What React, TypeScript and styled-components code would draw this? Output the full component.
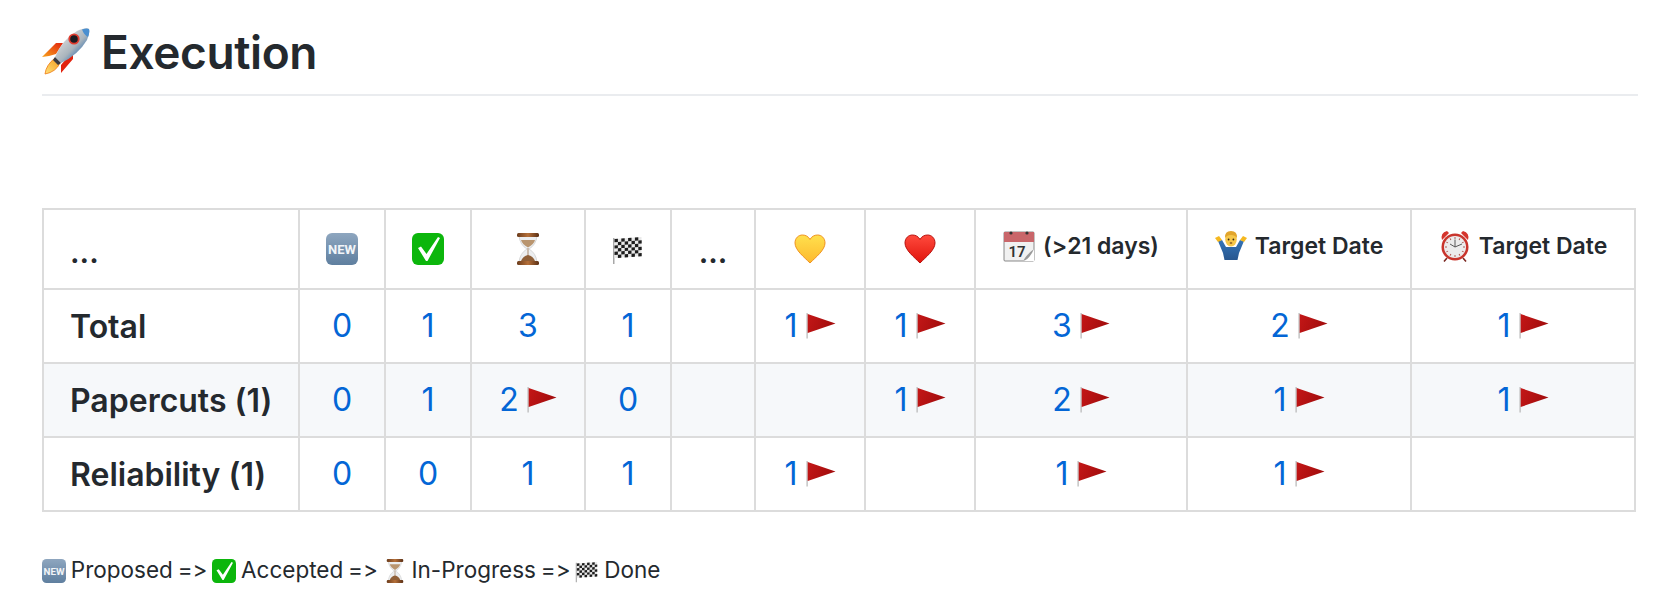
import React from "react";
import styled, { createGlobalStyle } from "styled-components";

const GlobalStyle = createGlobalStyle`
  html, body { margin: 0; padding: 0; background: #fff; }
  body {
    font-family: Inter, "Liberation Sans", sans-serif;
    color: #24292e;
    font-feature-settings: "calt" 0, "liga" 0;
  }
`;

const Page = styled.div`
  width: 1668px;
  height: 600px;
  padding: 0 30px 0 42px;
  box-sizing: border-box;
  overflow: hidden;
`;

const Title = styled.h1`
  margin: 0 0 112px;
  height: 96px;
  padding-top: 24px;
  box-sizing: border-box;
  border-bottom: 2px solid #eaecef;
  display: flex;
  align-items: flex-start;
  gap: 11px;
  font-size: 46px;
  line-height: 56px;
  font-weight: 600;
  letter-spacing: -0.4px;
`;

const Table = styled.table`
  border-collapse: collapse;
  table-layout: fixed;
  width: 1593px;
`;

const HeadCell = styled.th`
  border: 2px solid #dcdcdc;
  box-sizing: border-box;
  height: 80px;
  padding: 0;
  font-size: 23px;
  font-weight: 600;
  text-align: center;
  vertical-align: middle;
  white-space: nowrap;
`;

const Dots = styled(HeadCell)<{ $first?: boolean }>`
  font-size: 30px;
  text-align: ${(p) => (p.$first ? "left" : "center")};
  padding-left: ${(p) => (p.$first ? "26px" : "0")};
  padding-top: 6px;
`;

const HeadInner = styled.span`
  display: inline-flex;
  align-items: center;
  gap: 8px;
`;

const Row = styled.tr<{ $shade?: boolean }>`
  background: ${(p) => (p.$shade ? "#f6f8fa" : "#fff")};
`;

const LabelCell = styled.td`
  border: 2px solid #dcdcdc;
  height: 72px;
  padding: 0 0 0 26px;
  font-size: 32px;
  font-weight: 600;
  white-space: nowrap;
`;

const ValueCell = styled.td`
  border: 2px solid #dcdcdc;
  padding: 0;
  text-align: center;
  vertical-align: middle;
  white-space: nowrap;
`;

const Count = styled.a`
  display: inline-flex;
  align-items: center;
  gap: 8px;
  color: #0366d6;
  font-size: 32px;
  line-height: 36px;
  text-decoration: none;
`;

const Legend = styled.p`
  margin: 42px 0 0;
  font-size: 22.5px;
  line-height: 32px;
  word-spacing: -1.5px;
`;

const Icon = styled.svg`
  flex: none;
  display: inline-block;
  vertical-align: middle;
`;

const LegendIcon = styled(Icon)`
  vertical-align: -5px;
`;

const TitleIcon = styled(Icon)`
  margin-top: 4px;
`;

type IconProps = { size?: number; as?: typeof Icon };

const Rocket = ({ size = 48 }: IconProps) => (
  <TitleIcon width={size} height={size} viewBox="0 0 48 48">
    <defs>
      <linearGradient id="rocketBody" x1="0" y1="0" x2="1" y2="1">
        <stop offset="0.25" stopColor="#d3d6d8" />
        <stop offset="0.55" stopColor="#a9b4bc" />
        <stop offset="0.8" stopColor="#2f6fb0" />
      </linearGradient>
      <linearGradient id="rocketFlame" x1="0" y1="1" x2="1" y2="0">
        <stop offset="0" stopColor="#ffe27a" />
        <stop offset="1" stopColor="#f39a1c" />
      </linearGradient>
      <linearGradient id="rocketFin" x1="0" y1="1" x2="1" y2="0">
        <stop offset="0" stopColor="#f7a21b" />
        <stop offset="1" stopColor="#e2230e" />
      </linearGradient>
    </defs>
    <path d="M0 29 L14 15 L21 15 L14 26 L7 28 Z" fill="url(#rocketFin)" />
    <path d="M31 22 L31 31 L19 45 L19 37 L25 30 Z" fill="#e2230e" />
    <path d="M13 30 L18 35 Q14 44 3 46 Q4 37 13 30 Z" fill="url(#rocketFlame)" stroke="#ef7a12" strokeWidth="0.8" />
    <path d="M13 29 Q20 12 35 3 Q44 -1 47 1 Q48 5 45 12 Q36 27 19 35 Z" fill="url(#rocketBody)" />
    <path d="M40 1.5 Q45 0 47 1 Q48 4 46 9 Q42 7 40 1.5 Z" fill="#4a8fd0" />
    <circle cx="32" cy="11" r="5.6" fill="#e23b2e" />
    <circle cx="32" cy="11" r="3.8" fill="#1c1c22" />
    <path d="M13 29 L19 35 L16 37 L11 32 Z" fill="#3a3a40" />
  </TitleIcon>
);

const NewBadge = ({ size = 32, as }: IconProps) => (
  <Icon as={as} width={size} height={size} viewBox="0 0 32 32">
    <defs>
      <linearGradient id="newFill" x1="0" y1="0" x2="0" y2="1">
        <stop offset="0" stopColor="#8ea6bf" />
        <stop offset="1" stopColor="#5f7f9f" />
      </linearGradient>
    </defs>
    <rect width="32" height="32" rx="6" fill="url(#newFill)" />
    <text x="16" y="21" fontFamily="Roboto, sans-serif" fontSize="13" fontWeight="700" fill="#f2f5f8" textAnchor="middle">NEW</text>
  </Icon>
);

const CheckBox = ({ size = 32, as }: IconProps) => (
  <Icon as={as} width={size} height={size} viewBox="0 0 32 32">
    <rect width="32" height="32" rx="6" fill="#0cb60c" />
    <path d="M6 15 L9 13.5 L14.5 21 L26 4 L28 5 L15.5 28 L14 28 Z" fill="#fff" />
  </Icon>
);

const Hourglass = ({ size = 32, as }: IconProps) => (
  <Icon as={as} width={size} height={size} viewBox="0 0 32 32">
    <defs>
      <linearGradient id="glassWood" x1="0" y1="0" x2="1" y2="0">
        <stop offset="0" stopColor="#6b3c1c" />
        <stop offset="0.5" stopColor="#b5703a" />
        <stop offset="1" stopColor="#5a2f14" />
      </linearGradient>
    </defs>
    <path d="M7 3 L25 3 Q24 12 17 16 Q24 20 25 29 L7 29 Q8 20 15 16 Q8 12 7 3 Z" fill="#eceef0" stroke="#c4c4c4" strokeWidth="0.6" />
    <path d="M9 7 L23 7 Q22 11 16 14.5 Q10 11 9 7 Z" fill="#b9956f" />
    <path d="M15.6 15 H16.4 V25 H15.6 Z" fill="#9a7350" />
    <path d="M9 28 Q11 23 16 22 Q21 23 23 28 Z" fill="#8f5f38" />
    <rect x="5" y="0" width="22" height="4" rx="1.5" fill="url(#glassWood)" />
    <rect x="5" y="28" width="22" height="4" rx="1.5" fill="url(#glassWood)" />
  </Icon>
);

const squares: [number, number][] = [];
for (let c = 0; c < 8; c++) {
  for (let r = 0; r < 6; r++) {
    if ((c + r) % 2 === 0) squares.push([c, r]);
  }
}

const Checkered = ({ size = 32, as }: IconProps) => (
  <Icon as={as} width={size} height={size} viewBox="0 0 32 32">
    <path d="M1 5 L2.5 5 L2.5 31 L1 31 Z" fill="#a8a8a8" />
    <g transform="translate(2.5 6) skewY(-4)">
      <rect width="27" height="19" fill="#e9e9e9" />
      {squares.map(([c, r]) => (
        <rect key={`${c}-${r}`} x={c * 3.4} y={r * 3.2} width="3.4" height="3.2" fill="#1d1d1d" />
      ))}
    </g>
  </Icon>
);

const Heart = ({ size = 32, kind }: IconProps & { kind: "yellow" | "red" }) => {
  const yellow = kind === "yellow";
  return (
    <Icon width={size} height={size} viewBox="0 0 32 32">
      <defs>
        <linearGradient id={`heart-${kind}`} x1="0" y1="0" x2="0" y2="1">
          <stop offset="0" stopColor={yellow ? "#ffe04d" : "#ff4a3d"} />
          <stop offset="1" stopColor={yellow ? "#fdb92e" : "#e0140c"} />
        </linearGradient>
      </defs>
      <path
        d="M16 30 C10 24 1 17 1 10 C1 5 4.5 2 8.5 2 C11.5 2 14.5 3.5 16 6.5 C17.5 3.5 20.5 2 23.5 2 C27.5 2 31 5 31 10 C31 17 22 24 16 30 Z"
        fill={`url(#heart-${kind})`}
        stroke={yellow ? "#f0921e" : "#b8100c"}
        strokeWidth="1"
      />
    </Icon>
  );
};

const Calendar = ({ size = 32 }: IconProps) => (
  <Icon width={size} height={size} viewBox="0 0 32 32">
    <rect x="1" y="2" width="30" height="29" rx="1" fill="#f1f1f1" stroke="#6d6d6d" strokeWidth="0.8" />
    <rect x="1" y="2" width="30" height="10" fill="#c9666a" />
    <circle cx="8" cy="3" r="1.6" fill="#333" />
    <circle cx="24" cy="3" r="1.6" fill="#333" />
    <text x="14" y="27" fontFamily="Roboto, sans-serif" fontSize="15" fill="#333" textAnchor="middle">17</text>
    <path d="M31 19 L20 31 L31 31 Z" fill="#fff" />
    <path d="M31 19 Q24 24 20 31 Q26 30 31 19 Z" fill="#9a9a9a" />
  </Icon>
);

const Shrug = ({ size = 32 }: IconProps) => (
  <Icon width={size} height={size} viewBox="0 0 32 32">
    <defs>
      <linearGradient id="shrugShirt" x1="0" y1="0" x2="0" y2="1">
        <stop offset="0" stopColor="#3474b8" />
        <stop offset="1" stopColor="#27568f" />
      </linearGradient>
    </defs>
    <path d="M3 11 L7 10 L11 17 H21 L25 10 L29 11 L24 23 L22.5 30 H9.5 L8 23 Z" fill="url(#shrugShirt)" />
    <path d="M0 8 L4 6 L7 10 L3 12 Z M32 8 L28 6 L25 10 L29 12 Z" fill="#f5b81f" />
    <ellipse cx="16" cy="9.5" rx="5.8" ry="7" fill="#f6c74a" />
    <path d="M10 8 Q9.5 1 16 1 Q22.5 1 22 8 Q20 5 16 5 Q12 5 10 8 Z" fill="#e2a52c" />
    <circle cx="13.6" cy="9.5" r="0.9" fill="#3a2a12" />
    <circle cx="18.4" cy="9.5" r="0.9" fill="#3a2a12" />
    <ellipse cx="16" cy="13" rx="1.4" ry="0.8" fill="#7a4a1a" />
  </Icon>
);

const ticks = Array.from({ length: 12 }, (_, i) => i * 30);

const AlarmClock = ({ size = 32 }: IconProps) => (
  <Icon width={size} height={size} viewBox="0 0 32 32">
    <path d="M3 10 Q1 3 8 1 L10 3 Z M29 10 Q31 3 24 1 L22 3 Z" fill="#d5342c" />
    <path d="M8 28 L5 31.5 M24 28 L27 31.5" stroke="#7c2a24" strokeWidth="1.6" />
    <circle cx="16" cy="17" r="13.5" fill="#c9352d" />
    <circle cx="16" cy="17" r="11" fill="#ececec" />
    {ticks.map((deg) => (
      <rect key={deg} x="15.6" y="7" width="0.8" height="2" fill="#a33a34" transform={`rotate(${deg} 16 17)`} />
    ))}
    <path d="M16 9.5 V17 L11 14 M16 17 L23 14" fill="none" stroke="#4a4a4a" strokeWidth="0.9" />
  </Icon>
);

const RedFlag = () => (
  <Icon width={30} height={26} viewBox="0 0 30 26">
    <defs>
      <linearGradient id="flagRed" x1="0" y1="0" x2="1" y2="0.3">
        <stop offset="0" stopColor="#c41717" />
        <stop offset="1" stopColor="#a30d0d" />
      </linearGradient>
    </defs>
    <rect x="0.5" y="0" width="1.2" height="25.5" fill="#b5b5b5" />
    <path d="M1.7 1 L29.5 10.5 L1.7 20 Z" fill="url(#flagRed)" />
  </Icon>
);

type Col = { width: number; head: React.ReactNode; dots?: boolean };

const columns: Col[] = [
  { width: 256, head: "...", dots: true },
  { width: 86, head: <NewBadge /> },
  { width: 86, head: <CheckBox /> },
  { width: 114, head: <Hourglass /> },
  { width: 86, head: <Checkered /> },
  { width: 84, head: "...", dots: true },
  { width: 110, head: <Heart kind="yellow" /> },
  { width: 110, head: <Heart kind="red" /> },
  { width: 212, head: <HeadInner><Calendar /> (&gt;21 days)</HeadInner> },
  { width: 224, head: <HeadInner><Shrug /> Target Date</HeadInner> },
  { width: 224, head: <HeadInner><AlarmClock /> Target Date</HeadInner> },
];

type Cell = null | number | [number];

const rows: { label: string; shade?: boolean; cells: Cell[] }[] = [
  { label: "Total", cells: [0, 1, 3, 1, null, [1], [1], [3], [2], [1]] },
  { label: "Papercuts (1)", shade: true, cells: [0, 1, [2], 0, null, null, [1], [2], [1], [1]] },
  { label: "Reliability (1)", cells: [0, 0, 1, 1, null, [1], null, [1], [1], null] },
];

const renderCell = (cell: Cell) => {
  if (cell === null) return null;
  if (typeof cell === "number") return <Count href="#">{cell}</Count>;
  return (
    <Count href="#">
      {cell[0]}
      <RedFlag />
    </Count>
  );
};

const App = () => (
  <Page>
    <GlobalStyle />
    <Title>
      <Rocket />
      Execution
    </Title>
    <Table>
      <colgroup>
        {columns.map((col, i) => (
          <col key={i} width={col.width} />
        ))}
      </colgroup>
      <thead>
        <tr>
          {columns.map((col, i) =>
            col.dots ? (
              <Dots key={i} $first={i === 0}>{col.head}</Dots>
            ) : (
              <HeadCell key={i}>{col.head}</HeadCell>
            )
          )}
        </tr>
      </thead>
      <tbody>
        {rows.map((row) => (
          <Row key={row.label} $shade={row.shade}>
            <LabelCell>{row.label}</LabelCell>
            {row.cells.map((cell, i) => (
              <ValueCell key={i}>{renderCell(cell)}</ValueCell>
            ))}
          </Row>
        ))}
      </tbody>
    </Table>
    <Legend>
      <NewBadge size={24} as={LegendIcon} /> Proposed =&gt; <CheckBox size={24} as={LegendIcon} /> Accepted =&gt; <Hourglass size={24} as={LegendIcon} /> In-Progress =&gt; <Checkered size={24} as={LegendIcon} /> Done
    </Legend>
  </Page>
);

export default App;
